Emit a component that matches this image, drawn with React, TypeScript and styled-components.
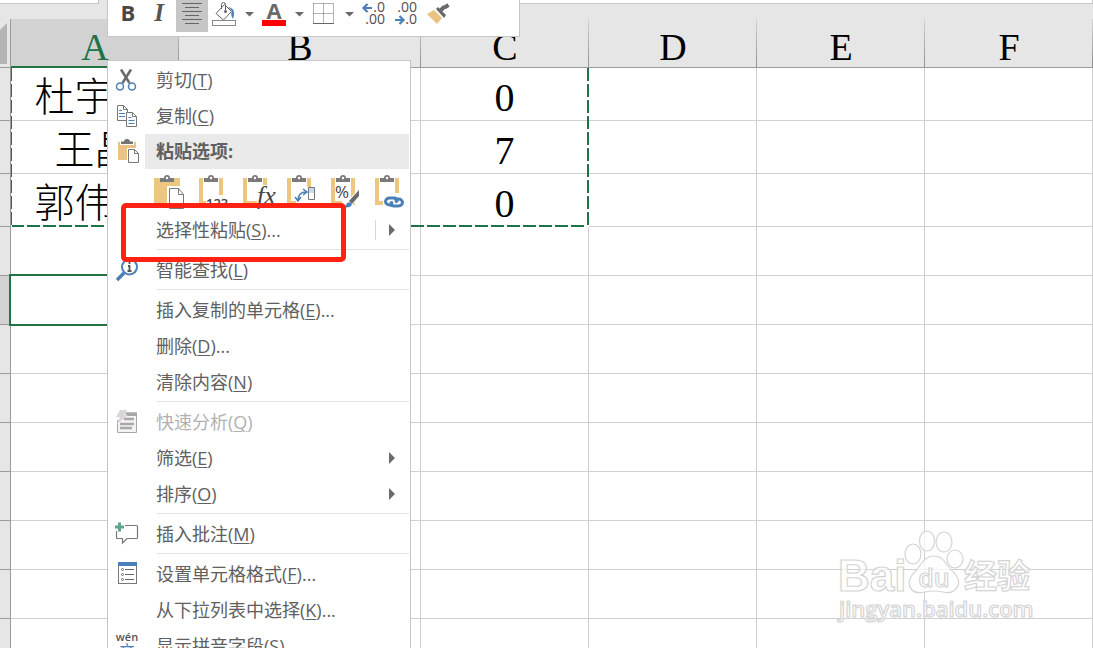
import React from "react";
import styled, { createGlobalStyle, css } from "styled-components";

const GlobalStyle = createGlobalStyle`
  *, *::before, *::after { box-sizing: border-box; }
  html, body { margin: 0; height: 100%; }
  #root { height: 100%; }
  body { background: #fff; overflow: hidden; }
  svg { overflow: visible; }
`;

const green = "#217346";
const ink = "#606060";
const frame = "#c6c6c6";
const uiFont = `"Open Sans", "Noto Sans CJK SC", sans-serif`;
const cellFont = `"Liberation Serif", "Noto Sans CJK SC", serif`;

const Window = styled.main`
  position: relative;
  height: 100vh;
  overflow: hidden;
  display: flex;
  flex-direction: column;
  background: #fff;
`;

const FormulaStrip = styled.div`
  flex: none;
  display: flex;
  gap: 8px;
  height: 19px;
  background: #e6e6e6;
`;

const StripBox = styled.div<{ $name?: boolean }>`
  height: 4px;
  background: #fff;
  border-bottom: 1px solid ${frame};
  border-right: 1px solid ${frame};
  flex: ${(p) => (p.$name ? "0 0 99px" : "1")};
`;

const SheetArea = styled.div`
  position: relative;
  flex: 1;
  min-height: 0;
`;

const Sheet = styled.table`
  width: 100%;
  table-layout: fixed;
  border-collapse: separate;
  border-spacing: 0;
  font-family: ${cellFont};
  color: #000;
`;

const Col = styled.col<{ $w?: number }>`
  ${(p) => p.$w && css`width: ${p.$w}px;`}
`;

const ColumnHeader = styled.th<{ $active?: boolean }>`
  height: 49px;
  padding: 8px 0 0;
  font-size: 38px;
  line-height: 38px;
  font-weight: 400;
  text-align: center;
  background:
    linear-gradient(to bottom, #d4d4d4, #8e8e8e) right top / 1px 100% no-repeat,
    ${(p) => (p.$active ? "#d2d2d2" : "#e6e6e6")};
  color: ${(p) => (p.$active ? green : "#000")};
  border-bottom: ${(p) => (p.$active ? `2px solid ${green}` : "1px solid #9b9b9b")};
`;

const Corner = styled.td`
  padding: 4px 4px 3px 0;
  background: #e6e6e6;
  border-right: 1px solid #9b9b9b;
  border-bottom: 1px solid #9b9b9b;
  vertical-align: bottom;
  svg { display: block; }
`;

const RowHeader = styled.th<{ $active?: boolean }>`
  padding: 0;
  background: ${(p) => (p.$active ? "#d2d2d2" : "#e6e6e6")};
  border-right: 1px solid #9b9b9b;
  border-bottom: 1px solid #9b9b9b;
`;

const Row = styled.tr<{ $tall?: boolean }>`
  height: ${(p) => (p.$tall ? 53 : 49)}px;
`;

const Cell = styled.td<{ $active?: boolean }>`
  position: relative;
  padding: 8px 0 0;
  text-align: center;
  white-space: pre;
  overflow: hidden;
  font-size: 40px;
  font-weight: 300;
  line-height: 44px;
  border-right: 1px solid #d0d0d0;
  border-bottom: 1px solid #d0d0d0;
  ${(p) =>
    p.$active &&
    css`
      overflow: visible;
      &::after {
        content: "";
        position: absolute;
        inset: -2px;
        border: 2px solid ${green};
      }
    `}
`;

const dash = (dir: string) =>
  `repeating-linear-gradient(${dir}, ${green} 0 13px, #fff 13px 16px)`;

const CopyRange = styled.div`
  position: absolute;
  left: 11px;
  top: 49px;
  width: 578px;
  height: 159px;
  pointer-events: none;
  background:
    ${dash("to bottom")} left top / 1px 100% no-repeat,
    ${dash("to bottom")} right top / 2px 100% no-repeat,
    ${dash("to right")} left bottom / 100% 2px no-repeat;
`;

const MiniToolbar = styled.div`
  position: absolute;
  left: 107px;
  top: 0;
  width: 413px;
  height: 37px;
  padding-left: 4px;
  display: flex;
  align-items: flex-start;
  background: #fff;
  border: 1px solid ${frame};
  border-top: 0;
`;

const ToolButton = styled.button<{ $w: number; $on?: boolean }>`
  flex: none;
  width: ${(p) => p.$w}px;
  height: 32px;
  padding: 0;
  border: 0;
  background: ${(p) => (p.$on ? frame : "transparent")};
  display: flex;
  justify-content: center;
  svg { display: block; }
`;

const Menu = styled.div`
  position: absolute;
  left: 107px;
  top: 60px;
  width: 304px;
  padding: 1px 1px 8px;
  background: #fff;
  border: 1px solid ${frame};
  font-family: ${uiFont};
  font-size: 18px;
  color: ${ink};
`;

const MenuItem = styled.button`
  display: flex;
  align-items: center;
  width: 100%;
  height: 36px;
  padding: 0;
  border: 0;
  background: transparent;
  font: inherit;
  line-height: 24px;
  color: inherit;
  text-align: left;
  &:disabled { color: #b1b1b1; }
`;

const IconSlot = styled.span`
  flex: none;
  width: 47px;
  padding-left: 6px;
  display: flex;
  svg { display: block; }
`;

const Label = styled.span`
  flex: 1;
  white-space: nowrap;
  u { text-underline-offset: 2px; text-decoration-thickness: 1px; }
`;

const Arrow = styled.span<{ $split?: boolean }>`
  display: flex;
  align-items: center;
  width: 34px;
  height: 20px;
  padding-left: 12px;
  border-left: 1px solid ${(p) => (p.$split ? "#d8d8d8" : "transparent")};
`;

const Separator = styled.hr`
  height: 1px;
  margin: 1px 0 2px 48px;
  border: 0;
  background: #e1e1e1;
`;

const PasteHeader = styled.div`
  display: flex;
  align-items: center;
  height: 35px;
  font-weight: 700;
`;

const PasteTitle = styled.span`
  flex: 1;
  height: 35px;
  margin-left: -11px;
  padding-left: 11px;
  line-height: 34px;
  background: #eaeaea;
`;

const PasteChoices = styled.div`
  display: flex;
  height: 43px;
  padding: 6px 0 0 44px;
  gap: 12px;
`;

const PasteButton = styled.button`
  width: 32px;
  height: 36px;
  padding: 0;
  border: 0;
  background: transparent;
  svg { display: block; }
`;

const Highlight = styled.div`
  position: absolute;
  left: 121px;
  top: 203px;
  width: 225px;
  height: 59px;
  border: 5px solid #ff2213;
  border-radius: 5px;
  pointer-events: none;
`;

const Watermark = styled.svg`
  position: absolute;
  right: 52px;
  top: 526px;
  pointer-events: none;
`;

const Caret = () => (
  <svg width="8" height="18" viewBox="0 0 8 18"><path d="M0 12h9l-4.500 4.500z" fill="#6a6a6a" /></svg>
);

const Triangle = () => (
  <svg width="7" height="12" viewBox="0 0 7 12"><path d="M1 0l6 6-6 6z" fill="#6a6a6a" /></svg>
);

const BoldIcon = () => (
  <svg width="24" height="32"><text x="12" y="21" textAnchor="middle" fontFamily="Open Sans" fontWeight="700" fontSize="22" fill="#484848">B</text></svg>
);
const ItalicIcon = () => (
  <svg width="24" height="32"><text x="11" y="21" textAnchor="middle" fontFamily="Liberation Serif" fontStyle="italic" fontWeight="700" fontSize="25" fill="#555">I</text></svg>
);
const AlignIcon = () => (
  <svg width="20" height="32"><path d="M0 3.500h20M3 7.500h14M0 11.500h20M3 15.500h14M0 19.500h20M3 23.500h14" stroke="#666" /></svg>
);
const BucketIcon = () => (
  <svg width="24" height="32" viewBox="0 0 24 32" fill="none">
    <path d="M4 13.500L12.500 4.500l7 7-8 8.500z" fill="#fff" stroke="#666" />
    <path d="M9.500 9V4.500q0-2 2-2t2 2V11" stroke="#666" />
    <path d="M16 7q6 1 6 6 0 3-1 6-3-4-1-8z" fill="#4a7fb8" />
    <circle cx="13.500" cy="11.500" r="1.500" fill="#666" />
    <rect x=".5" y="20.500" width="23" height="5" fill="#fff" stroke="#8a8a8a" />
  </svg>
);
const FontColorIcon = () => (
  <svg width="24" height="32">
    <text x="12" y="19" textAnchor="middle" fontFamily="Open Sans" fontWeight="700" fontSize="22" fill="#6a6a6a">A</text>
    <rect y="20" width="24" height="6" fill="#f00" />
  </svg>
);
const BordersIcon = () => (
  <svg width="22" height="32" fill="none" stroke="#666">
    <path d="M.5 3.500h20M.5 3.500v20M20.500 3.500v20M10.500 3.500v20M.5 13.500h20" strokeDasharray="1 1" />
    <path d="M0 23.500h21" />
  </svg>
);
const DecimalIcon = ({ less }: { less?: boolean }) => (
  <svg width="24" height="32" fontFamily="Open Sans" fontSize="14" fill="#505050">
    <text x="23" y="12" textAnchor="end">{less ? ".00" : ".0"}</text>
    <text x="23" y="24" textAnchor="end">{less ? ".0" : ".00"}</text>
    <path d={less ? "M1 20h8M5.500 16l4 4-4 4" : "M10 8H2M5.500 4l-4 4 4 4"} fill="none" stroke="#4a7fb8" strokeWidth="2.200" />
  </svg>
);
const BrushIcon = () => (
  <svg width="24" height="32" viewBox="0 0 24 32">
    <path d="M1 14l7-4 8 8-5 6z" fill="#eac282" />
    <path d="M10 9l2-2 8 8-2 3z" fill="#6a6a6a" />
    <path d="M14.500 10.500l3-3 2-.5 3-2" fill="none" stroke="#6a6a6a" strokeWidth="4" />
  </svg>
);

const CutIcon = () => (
  <svg width="22" height="24" viewBox="0 0 22 24" fill="none">
    <path d="M6 1.500L14.500 15M16 1.500L7.500 15" stroke="#6a6a6a" strokeWidth="2.500" />
    <circle cx="5" cy="18.500" r="3.500" stroke="#4a7fb8" strokeWidth="1.500" />
    <circle cx="17" cy="18.500" r="3.500" stroke="#4a7fb8" strokeWidth="1.500" />
  </svg>
);
const CopyIcon = () => (
  <svg width="22" height="24" viewBox="0 0 22 24" fill="#fff">
    <path d="M2.500 1.500h6l4 4v11h-10z" stroke="#777" />
    <path d="M8.500 1.500v4h4" stroke="#777" fill="none" />
    <path d="M4 6.500h3M4 9.500h6M4 12.500h6" stroke="#4a7fb8" />
    <path d="M11.500 8.500h6l4 4v10h-10z" stroke="#777" />
    <path d="M17.500 8.500v4h4" stroke="#777" fill="none" />
    <path d="M13.500 13.500h3M13.500 16.500h6M13.500 19.500h6" stroke="#4a7fb8" />
  </svg>
);
const PasteIcon = () => (
  <svg width="24" height="24" viewBox="0 0 24 24">
    <path d="M3 2h18v18H3z" fill="#eac282" />
    <path d="M5 5V0h14v5z" fill="#fff" />
    <path d="M6 4V1.500h3q0-2.500 3-2.500t3 2.500h3V4z" fill="#737373" />
    <path d="M12 8h13v15H12z" fill="#fff" />
    <path d="M13.500 9.500h6l4 4v9h-10z" fill="#fff" stroke="#777" />
    <path d="M19.500 9.500v4h4" fill="none" stroke="#777" />
  </svg>
);
const LookupIcon = () => (
  <svg width="24" height="26" viewBox="0 0 24 26" fill="none">
    <path d="M2 23l7-7" stroke="#4a7fb8" strokeWidth="3.500" />
    <circle cx="14.500" cy="10" r="7.500" fill="#fff" stroke="#4a7fb8" strokeWidth="2" />
    <path d="M13 9h1.500v5M12.500 14h4M14.500 5v2" stroke="#555" strokeWidth="1.800" />
  </svg>
);
const AnalysisIcon = () => (
  <svg width="22" height="24" viewBox="0 0 22 24">
    <path d="M2.500 10v12.500h19V3H10" fill="#f4f2f4" stroke="#aaa7aa" />
    <path d="M11 2.500h11v3.500H11z" fill="#aaa7aa" />
    <path d="M9 9h10M5 14h9M7 14h12M5 18h12" stroke="#aaa7aa" strokeWidth="2.500" />
    <path d="M5 0h7L9 5h4L2 14l3-7H1z" fill="#d8d4d8" />
  </svg>
);
const CommentIcon = () => (
  <svg width="24" height="24" viewBox="0 0 24 24" fill="none">
    <path d="M10 3.500h11.500a1 1 0 0 1 1 1v11a1 1 0 0 1-1 1H12l-4.500 4.500v-4.500H2.500a1 1 0 0 1-1-1V9" stroke="#777" strokeWidth="1.200" />
    <path d="M0 5h9M4.500 .5v9" stroke="#5fa48a" strokeWidth="3" />
  </svg>
);
const FormatIcon = () => (
  <svg width="24" height="24" viewBox="0 0 24 24" fill="none">
    <rect x="3.500" y="1.500" width="18" height="20" stroke="#777" />
    <path d="M3 0h19v4H3z" fill="#4a7fb8" />
    <path d="M10 7.500h9M10 12.500h9M10 17.500h9" stroke="#666" />
    <circle cx="7.500" cy="7.500" r="1" stroke="#666" /><circle cx="7.500" cy="12.500" r="1" stroke="#666" /><circle cx="7.500" cy="17.500" r="1" stroke="#666" />
  </svg>
);
const PinyinIcon = () => (
  <svg width="24" height="30" viewBox="0 0 24 30">
    <text x="12" y="10" textAnchor="middle" fontFamily="Open Sans" fontWeight="600" fontSize="11" fill="#555">wén</text>
    <text x="12" y="25" textAnchor="middle" fontFamily="Noto Sans CJK SC" fontSize="15" fill="#4a7fb8">文</text>
  </svg>
);

const Clipboard = ({ filled, children }: { filled?: boolean; children: React.ReactNode }) => (
  <svg width="32" height="36" viewBox="0 0 32 36">
    {filled ? (
      <path d="M1 3h26v28H1z" fill="#edc67f" />
    ) : (
      <path d="M4 5h20v23H4z" fill="#fff" stroke="#edc67f" strokeWidth="4" />
    )}
    <path d="M6 9V3h16v6z" fill={filled ? "#edc67f" : "#fff"} />
    <path d="M7 7V3h4q0-3 3-3t3 3h4v4z" fill="#7a7a7a" />
    <circle cx="14" cy="3" r="1.200" fill="#fff" />
    {children}
  </svg>
);

const pasteChoices = [
  {
    name: "粘贴",
    filled: true,
    art: (
      <>
        <path d="M14 11h19v25H14z" fill="#fff" />
        <path d="M16.500 13.500h9l5 6v14h-14z" fill="#fff" stroke="#777" />
        <path d="M25.500 13.500v6h5" fill="none" stroke="#777" />
      </>
    ),
  },
  {
    name: "值",
    art: (
      <>
        <path d="M9 20h23v16H9z" fill="#fff" />
        <text x="9" y="33" fontFamily="Open Sans" fontWeight="600" fontSize="13" fill="#444">123</text>
      </>
    ),
  },
  {
    name: "公式",
    art: (
      <>
        <path d="M16 10h16v26H16z" fill="#fff" />
        <text x="16" y="29" fontFamily="Liberation Serif" fontStyle="italic" fontSize="26" fill="#444">fx</text>
      </>
    ),
  },
  {
    name: "转置",
    art: (
      <>
        <path d="M11 12h21v24H11z" fill="#fff" />
        <path d="M23.500 12.500h6v12h-6z" fill="#fff" stroke="#777" />
        <path d="M24 13h5v5h-5z" fill="#c9daec" />
        <path d="M13 26q0-9 8-9M18 14l4 3-4 3M10 22l3 4 3-4" fill="none" stroke="#4a7fb8" strokeWidth="1.500" />
      </>
    ),
  },
  {
    name: "格式",
    art: (
      <>
        <path d="M30 13v9l-8 10h-9V24l8 0z" fill="#fff" />
        <text x="6" y="23" fontFamily="Open Sans" fontSize="17" fill="#444">%</text>
        <path d="M20 26l10-11v6l-7 8z" fill="#6a6a6a" />
        <path d="M12 32q5 0 6-4 3-2 5 1-1 5-11 3z" fill="#4a7fb8" />
      </>
    ),
  },
  {
    name: "粘贴链接",
    art: (
      <>
        <path d="M10 18h22v18H10z" fill="#fff" />
        <g fill="none" stroke="#4a7fb8" strokeWidth="3">
          <path d="M20 30h-3.500a4 3.500 0 0 1 0-7h4.500q3 0 3 3l-2 1" />
          <path d="M21 24h4.500a4 3.500 0 0 1 0 7h-4.500q-3 0-3-3l2-1" />
        </g>
      </>
    ),
  },
];

type Entry = {
  text: string;
  keyName: string;
  tail?: string;
  icon?: React.ReactNode;
  disabled?: boolean;
  arrow?: "plain" | "split";
};

const topGroup: Entry[] = [
  { text: "剪切", keyName: "T", icon: <CutIcon /> },
  { text: "复制", keyName: "C", icon: <CopyIcon /> },
];

const groups: Entry[][] = [
  [{ text: "选择性粘贴", keyName: "S", tail: "...", arrow: "split" }],
  [{ text: "智能查找", keyName: "L", icon: <LookupIcon /> }],
  [
    { text: "插入复制的单元格", keyName: "E", tail: "..." },
    { text: "删除", keyName: "D", tail: "..." },
    { text: "清除内容", keyName: "N" },
  ],
  [
    { text: "快速分析", keyName: "Q", icon: <AnalysisIcon />, disabled: true },
    { text: "筛选", keyName: "E", arrow: "plain" },
    { text: "排序", keyName: "O", arrow: "plain" },
  ],
  [{ text: "插入批注", keyName: "M", icon: <CommentIcon /> }],
  [
    { text: "设置单元格格式", keyName: "F", tail: "...", icon: <FormatIcon /> },
    { text: "从下拉列表中选择", keyName: "K", tail: "..." },
    { text: "显示拼音字段", keyName: "S", icon: <PinyinIcon /> },
  ],
];

const Item = ({ text, keyName, tail, icon, disabled, arrow }: Entry) => (
  <MenuItem role="menuitem" disabled={disabled}>
    <IconSlot>{icon}</IconSlot>
    <Label>{text}(<u>{keyName}</u>){tail}</Label>
    {arrow && <Arrow $split={arrow === "split"}><Triangle /></Arrow>}
  </MenuItem>
);

const columns = ["A", "B", "C", "D", "E", "F"];
const rows = [
  ["杜宇\u3000", "", "0"],
  ["王晶", "", "7"],
  ["郭伟\u3000", "", "0"],
  [], [], [], [], [], [], [], [], [],
];
const activeRow = 4;

export default function App() {
  return (
    <Window>
      <GlobalStyle />
      <FormulaStrip>
        <StripBox $name />
        <StripBox />
      </FormulaStrip>
      <SheetArea>
        <Sheet>
          <colgroup>
            <Col $w={11} /><Col $w={168} /><Col $w={242} /><Col $w={168} /><Col $w={168} /><Col $w={168} /><Col />
          </colgroup>
          <thead>
            <tr>
              <Corner><svg width="7" height="41"><path d="M7 0v41H0V7z" fill="#b4b4b4" /></svg></Corner>
              {columns.map((c) => (
                <ColumnHeader key={c} scope="col" $active={c === "A"}>{c}</ColumnHeader>
              ))}
            </tr>
          </thead>
          <tbody>
            {rows.map((row, r) => (
              <Row key={r} $tall={r < 3}>
                <RowHeader scope="row" $active={r === activeRow} />
                {columns.map((c, i) => (
                  <Cell key={c} $active={r === activeRow && i === 0}>{row[i]}</Cell>
                ))}
              </Row>
            ))}
          </tbody>
        </Sheet>
        <CopyRange />
      </SheetArea>

      <Watermark width="204" height="104" viewBox="0 0 204 104" fill="#fff" fillOpacity="0.7" stroke="#d4d4d4" strokeWidth="1.200">
        <text x="1" y="65" fontFamily="Liberation Sans" fontWeight="700" fontSize="44">Bai</text>
        <ellipse cx="76" cy="28" rx="8" ry="10" />
        <ellipse cx="90" cy="15" rx="7.500" ry="10" />
        <ellipse cx="107" cy="16" rx="8" ry="10" />
        <ellipse cx="118" cy="33" rx="8" ry="9" />
        <path d="M97 30q8 0 13 9 4 5 9 10 6 9-1 15-5 4-12 2-9-2-18 0-9 2-13-2-6-6 0-15 5-5 9-11 5-8 13-8z" />
        <text x="97" y="61" textAnchor="middle" fontFamily="Open Sans" fontWeight="600" fontSize="25">du</text>
        <text x="127" y="62" fontFamily="Noto Sans CJK SC" fontWeight="700" fontSize="33">经验</text>
        <text x="2" y="91" fontFamily="Open Sans" fontWeight="600" fontSize="22">jingyan.baidu.com</text>
      </Watermark>

      <MiniToolbar role="toolbar" aria-label="格式">
        <ToolButton $w={32} aria-label="加粗"><BoldIcon /></ToolButton>
        <ToolButton $w={32} aria-label="倾斜"><ItalicIcon /></ToolButton>
        <ToolButton $w={32} $on aria-label="居中"><AlignIcon /></ToolButton>
        <ToolButton $w={32} aria-label="填充颜色"><BucketIcon /></ToolButton>
        <ToolButton $w={18} aria-label="更多填充颜色"><Caret /></ToolButton>
        <ToolButton $w={32} aria-label="字体颜色"><FontColorIcon /></ToolButton>
        <ToolButton $w={18} aria-label="更多字体颜色"><Caret /></ToolButton>
        <ToolButton $w={32} aria-label="边框"><BordersIcon /></ToolButton>
        <ToolButton $w={18} aria-label="更多边框"><Caret /></ToolButton>
        <ToolButton $w={32} aria-label="增加小数位数"><DecimalIcon /></ToolButton>
        <ToolButton $w={32} aria-label="减少小数位数"><DecimalIcon less /></ToolButton>
        <ToolButton $w={32} aria-label="格式刷"><BrushIcon /></ToolButton>
      </MiniToolbar>

      <Menu role="menu">
        {topGroup.map((e) => <Item key={e.text} {...e} />)}
        <PasteHeader>
          <IconSlot><PasteIcon /></IconSlot>
          <PasteTitle>粘贴选项:</PasteTitle>
        </PasteHeader>
        <PasteChoices>
          {pasteChoices.map((p) => (
            <PasteButton key={p.name} aria-label={p.name}>
              <Clipboard filled={p.filled}>{p.art}</Clipboard>
            </PasteButton>
          ))}
        </PasteChoices>
        {groups.map((g, i) => (
          <React.Fragment key={i}>
            {i > 0 && <Separator />}
            {g.map((e) => <Item key={e.text} {...e} />)}
          </React.Fragment>
        ))}
      </Menu>
      <Highlight />
    </Window>
  );
}
